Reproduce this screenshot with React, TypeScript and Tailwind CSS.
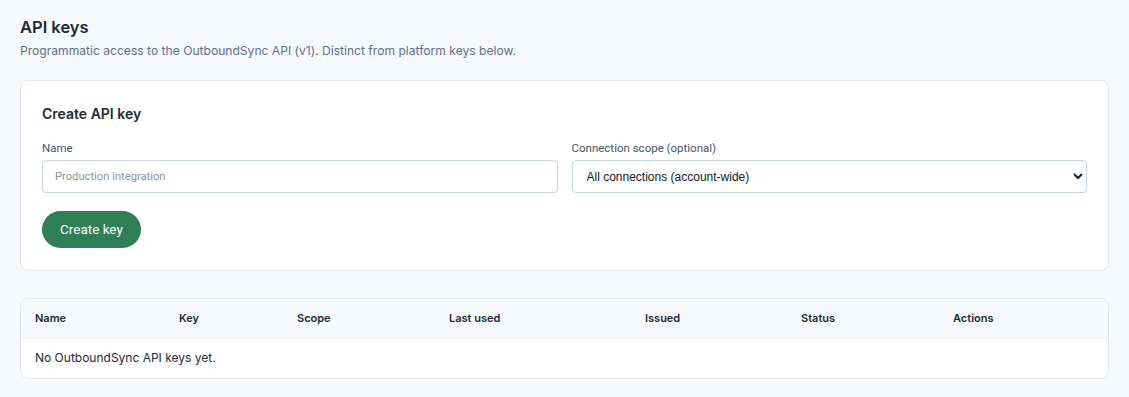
import React from "react";

const columns = ["Name", "Key", "Scope", "Last used", "Issued", "Status", "Actions"];

export default function App(): JSX.Element {
  return (
    <div className="min-h-[397px] bg-[#f7f9fc] px-5 pt-[15px] pb-5 font-['Inter',sans-serif] text-[#1e293b]">
      {/* Header */}
      <h1 className="text-[16.5px] font-semibold leading-[24px] text-[#1f2937]">API keys</h1>
      <p className="mt-[4px] text-[12.1px] leading-[16px] text-[#5e6f8f]">
        Programmatic access to the OutboundSync API (v1). Distinct from platform keys below.
      </p>

      {/* Create card */}
      <div className="mt-[21px] rounded-lg border border-[#e2e8f0] bg-white px-[21px] pt-[23px] pb-[22px]">
        <h2 className="text-[14px] font-semibold leading-[20px] text-[#1f2937]">Create API key</h2>
        <div className="mt-[16px] grid grid-cols-2 gap-[14px]">
          <div className="flex flex-col">
            <label className="font-['Roboto',sans-serif] text-[11.5px] leading-[16px] text-[#475569]">Name</label>
            <input
              placeholder="Production integration"
              className="mt-[4px] h-[33px] rounded-[4px] border border-[#c8d3e3] bg-white px-3 font-['Roboto',sans-serif] text-[11.2px] text-[#1f2937] placeholder:text-[#8a94a6] outline-none"
            />
          </div>
          <div className="flex flex-col">
            <label className="font-['Roboto',sans-serif] text-[11.5px] leading-[16px] text-[#475569]">
              Connection scope (optional)
            </label>
            <select className="mt-[4px] h-[33px] rounded-[4px] border border-[#c8d3e3] bg-white pl-[10px] pr-2 font-['Liberation_Sans',Arial,sans-serif] text-[12px] text-[#111827] outline-none">
              <option>All connections (account-wide)</option>
            </select>
          </div>
        </div>
        <button className="mt-[18px] h-[37px] rounded-full bg-[#2f7f58] px-[18px] font-['Roboto',sans-serif] text-[13.5px] text-white">
          Create key
        </button>
      </div>

      {/* Keys table */}
      <div className="mt-[27px] overflow-hidden rounded-lg border border-[#e2e8f0] bg-white">
        <div className="grid h-[39px] grid-cols-[144px_118px_152px_196px_156px_152px_1fr] items-center border-b border-[#edf1f6] bg-[#f7f9fc] text-[11px] font-semibold text-[#1f2937]">
          {columns.map((c) => (
            <div key={c} className="px-[14px]">
              {c}
            </div>
          ))}
        </div>
        <div className="flex h-[40px] items-center px-[14px] text-[12px] text-[#1f2937]">
          No OutboundSync API keys yet.
        </div>
      </div>
    </div>
  );
}
